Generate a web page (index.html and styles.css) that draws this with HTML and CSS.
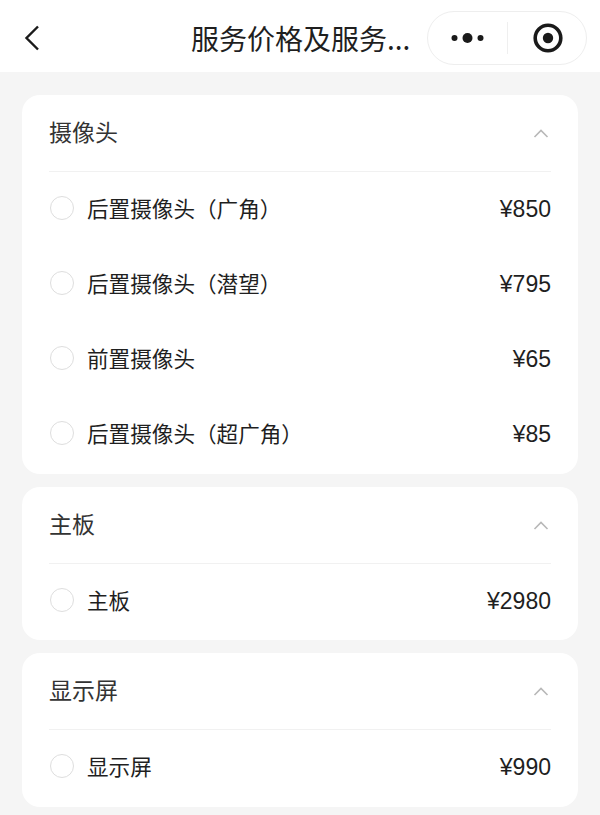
FILE: index.html
```html
<!DOCTYPE html>
<html lang="zh-CN">
  <head>
    <meta charset="UTF-8" />
    <meta name="viewport" content="width=device-width, initial-scale=1.0" />
    <title>服务价格及服务...</title>
    <link rel="stylesheet" href="styles.css">
  </head>
  <body>
    <div class="nav">
      <svg class="back" width="16" height="26" viewBox="0 0 16 26">
        <path d="M14 1.5 L2.5 13 L14 24.5" fill="none" stroke="#1a1a1a" stroke-width="2.4" />
      </svg>
      <div class="nav-title">服务价格及服务...</div>
      <div class="capsule">
        <svg class="capsule-more" width="33" height="12" viewBox="0 0 33 12">
          <circle cx="3.5" cy="6" r="3" fill="#1a1a1a" />
          <circle cx="16.5" cy="6" r="5" fill="#1a1a1a" />
          <circle cx="29.5" cy="6" r="3" fill="#1a1a1a" />
        </svg>
        <div class="capsule-line"></div>
        <svg class="capsule-target" width="30" height="30" viewBox="0 0 30 30">
          <circle cx="15" cy="15" r="12.8" fill="none" stroke="#1a1a1a" stroke-width="3.6" />
          <circle cx="15" cy="15" r="5.2" fill="#1a1a1a" />
        </svg>
      </div>
    </div>

    <div class="list">
      <div class="card">
        <div class="card-head">
          <span class="head-text">摄像头</span>
          <svg class="arrow" width="16" height="10" viewBox="0 0 16 10"><path d="M1.5 9 L8 2.5 L14.5 9" fill="none" stroke="#b8b8b8" stroke-width="1.6" /></svg>
        </div>
        <div class="row"><i class="radio"></i><span class="name">后置摄像头（广角）</span><span class="price">¥850</span></div>
        <div class="row"><i class="radio"></i><span class="name">后置摄像头（潜望）</span><span class="price">¥795</span></div>
        <div class="row"><i class="radio"></i><span class="name">前置摄像头</span><span class="price">¥65</span></div>
        <div class="row"><i class="radio"></i><span class="name">后置摄像头（超广角）</span><span class="price">¥85</span></div>
      </div>

      <div class="card">
        <div class="card-head">
          <span class="head-text">主板</span>
          <svg class="arrow" width="16" height="10" viewBox="0 0 16 10"><path d="M1.5 9 L8 2.5 L14.5 9" fill="none" stroke="#b8b8b8" stroke-width="1.6" /></svg>
        </div>
        <div class="row"><i class="radio"></i><span class="name">主板</span><span class="price">¥2980</span></div>
      </div>

      <div class="card">
        <div class="card-head">
          <span class="head-text">显示屏</span>
          <svg class="arrow" width="16" height="10" viewBox="0 0 16 10"><path d="M1.5 9 L8 2.5 L14.5 9" fill="none" stroke="#b8b8b8" stroke-width="1.6" /></svg>
        </div>
        <div class="row"><i class="radio"></i><span class="name">显示屏</span><span class="price">¥990</span></div>
      </div>
    </div>
  </body>
</html>
```

FILE: styles.css
```css
html,
body {
  height: 100%;
}
body {
  margin: 0;
  background-color: #f5f5f5;
  color: #1f1f1f;
  font-family: "Noto Sans CJK SC", "Liberation Sans", sans-serif;
  overflow: hidden;
}

.nav {
  display: flex;
  align-items: center;
  height: 72px;
  padding: 4px 13px 0 24px;
  box-sizing: border-box;
  background-color: #fff;
}
.back {
  flex: none;
}
.nav-title {
  margin-left: 151px;
  font-size: 28px;
  line-height: 36px;
  white-space: nowrap;
}
.capsule {
  display: flex;
  align-items: center;
  width: 160px;
  height: 54px;
  margin-left: auto;
  box-sizing: border-box;
  border: 1px solid #eeeeee;
  border-radius: 27px;
}
.capsule-more {
  margin-left: 23px;
}
.capsule-line {
  width: 1px;
  height: 32px;
  margin-left: 23px;
  background-color: #efefef;
}
.capsule-target {
  margin-left: 25px;
}

.list {
  display: flex;
  flex-direction: column;
  gap: 13px;
  padding: 23px 22px 0;
}
.card {
  padding: 0 27px 1.5px;
  border-radius: 18px;
  background-color: #fff;
}
.card-head {
  display: flex;
  align-items: center;
  justify-content: space-between;
  height: 76px;
  border-bottom: 1px solid #f1f1f1;
  font-size: 23px;
  color: #333;
}
.head-text {
  padding-bottom: 4px;
}
.arrow {
  margin: 0 2px 0 0;
}
.row {
  display: flex;
  align-items: center;
  height: 75px;
  font-size: 21.6px;
}
.radio {
  flex: none;
  width: 24px;
  height: 24px;
  margin: -3px 13px 0 1px;
  box-sizing: border-box;
  border: 1.5px solid #dedede;
  border-radius: 50%;
}
.name {
  flex: 1;
  padding-bottom: 4px;
}
.price {
  font-family: "Liberation Sans", sans-serif;
  font-size: 23px;
}
```
